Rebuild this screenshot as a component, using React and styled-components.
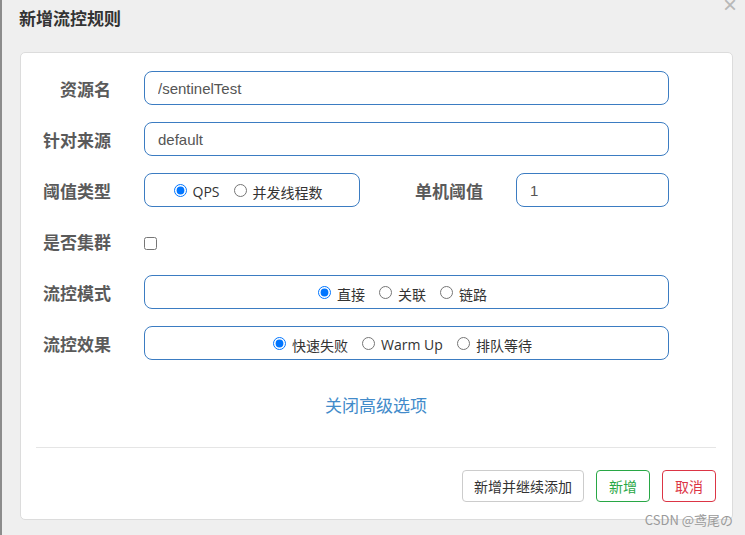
import React from "react";
import styled, { createGlobalStyle } from "styled-components";

const Global = createGlobalStyle`
  html, body {
    margin: 0;
    padding: 0;
    background: #efefef;
    font-family: "Liberation Sans", "Noto Sans CJK SC", sans-serif;
  }
`;

const Page = styled.div`
  position: relative;
  display: flex;
  width: 745px;
  height: 535px;
  overflow: hidden;
`;

const Backdrop = styled.div`
  width: 2px;
  background: #8c8c8c;
  flex-shrink: 0;
`;

const Modal = styled.div`
  flex: 1;
  display: flex;
  flex-direction: column;
  background: #efefef;
`;

const Header = styled.div`
  height: 52px;
  padding: 6px 0 0 17px;
  box-sizing: border-box;
`;

const Title = styled.h4`
  margin: 0;
  font-family: "Noto Sans CJK SC", sans-serif;
  font-size: 17px;
  line-height: 24px;
  font-weight: 700;
  color: #333;
`;

const Close = styled.span`
  position: absolute;
  top: -7px;
  right: 8px;
  font-size: 24px;
  line-height: 24px;
  color: #b8b8b8;
  font-family: "Liberation Sans", sans-serif;
`;

const Card = styled.div`
  margin: 0 12px 0 18px;
  height: 468px;
  box-sizing: border-box;
  background: #fff;
  border: 1px solid #dcdcdc;
  border-radius: 5px;
  padding: 18px 16px 0 15px;
  display: flex;
  flex-direction: column;
`;

const Form = styled.div`
  display: flex;
  flex-direction: column;
  gap: 17px;
`;

const Row = styled.div`
  display: grid;
  grid-template-columns: 75px 525px;
  column-gap: 33px;
  align-items: center;
  height: 34px;
`;

const Label = styled.label`
  font-family: "Noto Sans CJK SC", sans-serif;
  font-size: 17px;
  font-weight: 700;
  color: #5a5a5a;
  text-align: right;
  white-space: nowrap;
`;

const Control = styled.div`
  display: flex;
  align-items: center;
  height: 34px;
`;

const Input = styled.input`
  width: ${(p) => p.$width || "100%"};
  height: 34px;
  box-sizing: border-box;
  border: 1px solid #3b7cc2;
  border-radius: 8px;
  padding: 0 13px;
  font-family: "Liberation Sans", "Noto Sans CJK SC", sans-serif;
  font-size: 15px;
  color: #555;
  background: #fff;
  outline: none;
`;

const RadioBox = styled.div`
  width: ${(p) => p.$width || "100%"};
  height: 34px;
  box-sizing: border-box;
  border: 1px solid #3b7cc2;
  border-radius: 8px;
  display: flex;
  align-items: center;
  justify-content: center;
  gap: 14px;
  padding: 3px 8px 0 0;
`;

const RadioItem = styled.label`
  display: inline-flex;
  align-items: center;
  font-family: "Open Sans", "Noto Sans CJK SC", sans-serif;
  font-size: 14px;
  color: #333;
  white-space: nowrap;

  input {
    margin: 0 6px 3px 0;
    width: 13px;
    height: 13px;
  }
`;

const SubLabel = styled(Label)`
  flex: 1;
  margin-right: 33px;
`;

const Check = styled.input`
  margin: 4px 0 0 0;
  width: 13px;
  height: 13px;
`;

const Toggle = styled.a`
  align-self: center;
  margin-top: 34px;
  font-family: "Noto Sans CJK SC", sans-serif;
  font-size: 17px;
  line-height: 22px;
  color: #428bca;
  text-decoration: none;
  cursor: pointer;
`;

const Divider = styled.hr`
  margin: 31px 0 0 0;
  border: none;
  border-top: 1px solid #e5e5e5;
`;

const Footer = styled.div`
  display: flex;
  justify-content: flex-end;
  gap: 12px;
  margin-top: 22px;
`;

const Button = styled.button`
  height: 32px;
  min-width: 54px;
  padding: 0 11px;
  box-sizing: border-box;
  background: #fff;
  border: 1px solid ${(p) => p.$border};
  border-radius: 4px;
  color: ${(p) => p.$color};
  font-family: "Noto Sans CJK SC", sans-serif;
  font-size: 14px;
  cursor: pointer;
`;

const Watermark = styled.span`
  position: absolute;
  right: 12px;
  bottom: 6px;
  font-family: "Noto Sans CJK SC", sans-serif;
  font-size: 13px;
  color: #9a9a9a;
`;

const Radios = ({ name, options, checked, width }) => (
  <RadioBox $width={width}>
    {options.map((o) => (
      <RadioItem key={o}>
        <input type="radio" name={name} defaultChecked={o === checked} />
        {o}
      </RadioItem>
    ))}
  </RadioBox>
);

export default function App() {
  return (
    <Page>
      <Global />
      <Backdrop />
      <Modal>
        <Header>
          <Title>新增流控规则</Title>
        </Header>
        <Card>
          <Form>
            <Row>
              <Label>资源名</Label>
              <Control>
                <Input defaultValue="/sentinelTest" />
              </Control>
            </Row>
            <Row>
              <Label>针对来源</Label>
              <Control>
                <Input defaultValue="default" />
              </Control>
            </Row>
            <Row>
              <Label>阈值类型</Label>
              <Control>
                <Radios name="grade" width="216px" options={["QPS", "并发线程数"]} checked="QPS" />
                <SubLabel>单机阈值</SubLabel>
                <Input $width="153px" defaultValue="1" />
              </Control>
            </Row>
            <Row>
              <Label>是否集群</Label>
              <Control>
                <Check type="checkbox" />
              </Control>
            </Row>
            <Row>
              <Label>流控模式</Label>
              <Control>
                <Radios name="strategy" options={["直接", "关联", "链路"]} checked="直接" />
              </Control>
            </Row>
            <Row>
              <Label>流控效果</Label>
              <Control>
                <Radios name="behavior" options={["快速失败", "Warm Up", "排队等待"]} checked="快速失败" />
              </Control>
            </Row>
          </Form>
          <Toggle>关闭高级选项</Toggle>
          <Divider />
          <Footer>
            <Button $border="#ccc" $color="#333">新增并继续添加</Button>
            <Button $border="#28a745" $color="#28a745">新增</Button>
            <Button $border="#dc3545" $color="#dc3545">取消</Button>
          </Footer>
        </Card>
      </Modal>
      <Close>×</Close>
      <Watermark>CSDN @鸢尾の</Watermark>
    </Page>
  );
}
